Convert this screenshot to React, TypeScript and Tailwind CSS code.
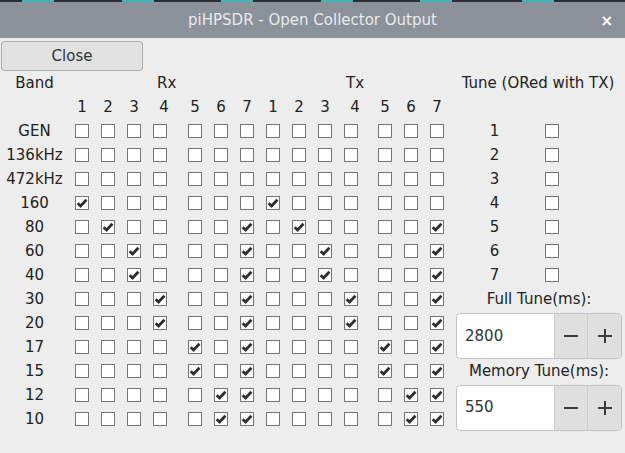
import React from "react";
import type { FC } from "react";

const font = { fontFamily: '"DejaVu Sans", "Liberation Sans", sans-serif' };

interface IBand {
  name: string;
  rx: number[];
  tx: number[];
}

const bands: IBand[] = [
  { name: "GEN", rx: [], tx: [] },
  { name: "136kHz", rx: [], tx: [] },
  { name: "472kHz", rx: [], tx: [] },
  { name: "160", rx: [1], tx: [1] },
  { name: "80", rx: [2, 7], tx: [2, 7] },
  { name: "60", rx: [3, 7], tx: [3, 7] },
  { name: "40", rx: [3, 7], tx: [3, 7] },
  { name: "30", rx: [4, 7], tx: [4, 7] },
  { name: "20", rx: [4, 7], tx: [4, 7] },
  { name: "17", rx: [5, 7], tx: [5, 7] },
  { name: "15", rx: [5, 7], tx: [5, 7] },
  { name: "12", rx: [6, 7], tx: [6, 7] },
  { name: "10", rx: [6, 7], tx: [6, 7] },
];

const CheckBox: FC<{ checked?: boolean }> = ({ checked }) => (
  <div className="flex items-center justify-center">
    <span className="flex h-[14px] w-[14px] items-center justify-center border border-[#747474] bg-white">
      {checked && (
        <svg width="12" height="12" viewBox="0 0 12 12">
          <path d="M1.6 6.2 L4.6 9 L10.4 2.8" fill="none" stroke="#2e2e2e" strokeWidth="2.8" />
        </svg>
      )}
    </span>
  </div>
);

const Num: FC<{ n: number; shift?: boolean }> = ({ n, shift }) => (
  <div className={shift ? "pl-[8px] text-center" : "text-center"}>{n}</div>
);

const SpinBox: FC<{ value: string }> = ({ value }) => (
  <div className="ml-[6px] mr-[3px] flex h-[46px] overflow-hidden rounded-[4px] border border-[#c2c2c2] bg-white">
    <div className="flex flex-1 items-center pl-[8px] text-[#2e3436]">{value}</div>
    <div className="flex w-[33px] items-center justify-center border-l border-[#cdcdcd] bg-[#dfdfdf]">
      <span className="h-[2px] w-[14px] bg-[#3a3a3a]" />
    </div>
    <div className="flex w-[34px] items-center justify-center border-l border-[#cdcdcd] bg-[#dfdfdf]">
      <svg width="16" height="16" viewBox="0 0 16 16">
        <path d="M8 1 V15 M1 8 H15" stroke="#3a3a3a" strokeWidth="2" />
      </svg>
    </div>
  </div>
);

const BandRow: FC<{ band: IBand; index: number }> = ({ band, index }) => (
  <>
    <div className="text-center">{band.name}</div>
    {[1, 2, 3, 4].map((c) => (
      <CheckBox key={`rx${c}`} checked={band.rx.includes(c)} />
    ))}
    <div />
    {[5, 6, 7].map((c) => (
      <CheckBox key={`rx${c}`} checked={band.rx.includes(c)} />
    ))}
    {[1, 2, 3, 4].map((c) => (
      <CheckBox key={`tx${c}`} checked={band.tx.includes(c)} />
    ))}
    <div />
    {[5, 6, 7].map((c) => (
      <CheckBox key={`tx${c}`} checked={band.tx.includes(c)} />
    ))}
    {index < 7 && (
      <>
        <div className="text-center">{index + 1}</div>
        <CheckBox />
        <div />
      </>
    )}
    {index === 7 && <div className="col-span-3 pl-[3px] text-center">Full Tune(ms):</div>}
    {index === 8 && (
      <div className="col-span-3 row-span-2 flex items-center pt-[2px]">
        <div className="w-full">
          <SpinBox value="2800" />
        </div>
      </div>
    )}
    {index === 10 && <div className="col-span-3 pl-[3px] text-center">Memory Tune(ms):</div>}
    {index === 11 && (
      <div className="col-span-3 row-span-2 flex items-center pt-[1px]">
        <div className="w-full">
          <SpinBox value="550" />
        </div>
      </div>
    )}
  </>
);

const App: FC = () => {
  return (
    <div className="flex h-[453px] w-[625px] flex-col overflow-hidden bg-[#ededed] text-[15px] text-[#222]" style={font}>
      <svg width="625" height="2" className="block bg-[#2b2f33]">
        {[22, 122, 221, 321, 420, 522].map((x) => (
          <rect key={x} x={x} y="0" width="32" height="2" fill="#3fb3b8" />
        ))}
      </svg>
      <div className="relative flex h-[36px] items-center justify-center bg-[#8a9199] text-[#e9eaec]">
        <span>piHPSDR - Open Collector Output</span>
        <span className="absolute right-[12px] top-[8px] text-[15px] font-bold text-white">×</span>
      </div>
      <button className="ml-[1px] mt-[3px] h-[30px] w-[142px] rounded-[3px] border border-[#adadad] bg-[#e1e1e1] pt-[1px] text-[#2e3436]">
        Close
      </button>
      <div className="grid grid-cols-[69px_26px_26px_26px_26px_9px_26px_26px_26px_26px_26px_26px_26px_8px_26px_26px_26px_89px_25px_61px] auto-rows-[24px] items-center">
        <div className="text-center">Band</div>
        <div className="col-span-3" />
        <div className="pl-[10px] text-center">Rx</div>
        <div className="col-span-7" />
        <div className="pl-[8px] text-center">Tx</div>
        <div className="col-span-4" />
        <div className="col-span-3 pl-[1px] text-center">Tune (ORed with TX)</div>

        <div />
        <Num n={1} />
        <Num n={2} />
        <Num n={3} />
        <Num n={4} shift />
        <div />
        <Num n={5} />
        <Num n={6} />
        <Num n={7} />
        <Num n={1} />
        <Num n={2} />
        <Num n={3} />
        <Num n={4} shift />
        <div />
        <Num n={5} />
        <Num n={6} />
        <Num n={7} />
        <div className="col-span-3" />

        {bands.map((b, i) => (
          <BandRow key={b.name} band={b} index={i} />
        ))}
      </div>
    </div>
  );
};

export default App;
